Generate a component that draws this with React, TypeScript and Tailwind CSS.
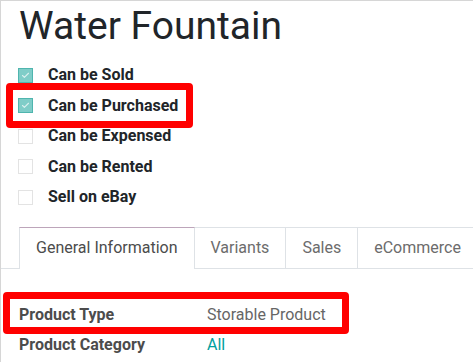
import { Check } from 'lucide-react';

const options = [
  { label: 'Can be Sold', checked: true },
  { label: 'Can be Purchased', checked: true },
  { label: 'Can be Expensed', checked: false },
  { label: 'Can be Rented', checked: false },
  { label: 'Sell on eBay', checked: false },
];

const tabs = ['General Information', 'Variants', 'Sales', 'eCommerce'];

function Checkbox({ checked }: { checked: boolean }) {
  if (checked) {
    return (
      <span className="w-[15px] h-[15px] flex items-center justify-center bg-[#7fcdc8] border border-[#4fb5ae]">
        <Check className="w-[9px] h-[9px] text-white opacity-70" strokeWidth={3} />
      </span>
    );
  }
  return <span className="w-[15px] h-[15px] bg-white border border-[#e3e3e3]" />;
}

export default function App() {
  return (
    <div
      className="relative w-[473px] h-[362px] overflow-hidden bg-white border-l border-t border-[#d6d6d6]"
      style={{ fontFamily: 'Roboto, "Liberation Sans", sans-serif' }}
    >
      <h1 className="pl-[18px] pt-[1px] text-[39px] leading-[48px] text-[#212529] font-normal">
        Water Fountain
      </h1>

      <div className="mt-[10px] flex flex-col pl-[17px]">
        {options.map((opt) => (
          <div key={opt.label} className="h-[30.5px] flex items-center gap-[15px]">
            <Checkbox checked={opt.checked} />
            <span className="text-[16px] font-bold text-[#212529]">{opt.label}</span>
          </div>
        ))}
      </div>

      <div className="mt-[14px] flex border-b border-[#dee2e6] pl-[18px]">
        {tabs.map((tab, i) =>
          i === 0 ? (
            <div
              key={tab}
              className="-mb-px h-[42px] px-4 shrink-0 whitespace-nowrap flex items-center bg-white border-t border-x border-t-[#bda5ba] border-x-[#dee2e6] text-[16px] text-[#4c4c4c]"
            >
              {tab}
            </div>
          ) : (
            <div
              key={tab}
              className="h-[41px] px-4 shrink-0 whitespace-nowrap flex items-center border-t border-r border-[#dee2e6] text-[16px] text-[#6c6c6c]"
            >
              {tab}
            </div>
          )
        )}
        <div className="flex-1 border-t border-[#dee2e6]" />
      </div>

      <div className="mt-[31px] pl-[18px] flex flex-col">
        <div className="h-[30px] flex items-center">
          <span className="w-[188px] text-[16px] font-bold text-[#4c4c4c]">Product Type</span>
          <span className="text-[16px] text-[#666]">Storable Product</span>
        </div>
        <div className="h-[30px] flex items-center">
          <span className="w-[188px] text-[16px] font-bold text-[#4c4c4c]">Product Category</span>
          <span className="text-[16px] text-[#00a09d]">All</span>
        </div>
      </div>

      {/* annotation boxes */}
      <div className="absolute left-[5px] top-[82px] w-[187px] h-[45px] border-[7px] border-[#ff0000] rounded-[4px]" />
      <div className="absolute left-[2px] top-[291px] w-[346px] h-[42px] border-[7px] border-[#ff0000] rounded-[4px]" />
    </div>
  );
}
